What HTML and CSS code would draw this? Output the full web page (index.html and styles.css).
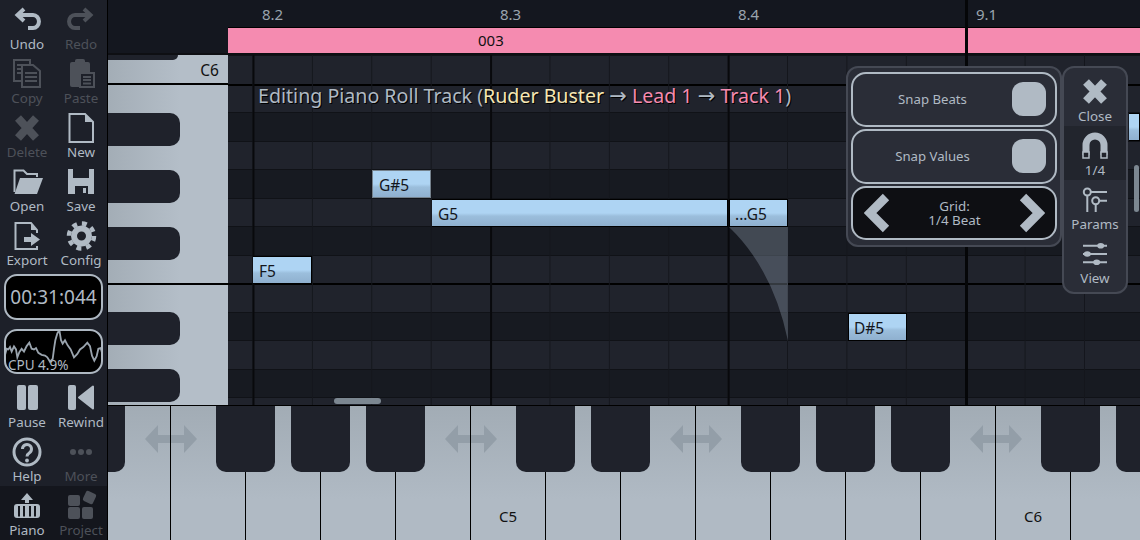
FILE: index.html
```html
<!DOCTYPE html>
<html lang="en">
<head>
    <meta charset="UTF-8">
    <meta name="viewport" content="width=device-width, initial-scale=1.0">
    <title>Piano Roll</title>
    <link rel="stylesheet" href="styles.css">
</head>
<body>

<div class="app">
    <div class="sidebar">
        <div class="tool-grid">
            <div class="tool">
                <svg class="icon" viewBox="0 0 28 28"><path class="line4" d="M11 4 L4.500 10 L11 16 M5 10 H20 a5.500 6 0 0 1 0 13 H15"/></svg>
                <span>Undo</span>
            </div>
            <div class="tool off">
                <svg class="icon flip" viewBox="0 0 28 28"><path class="line4" d="M11 4 L4.500 10 L11 16 M5 10 H20 a5.500 6 0 0 1 0 13 H15"/></svg>
                <span>Redo</span>
            </div>
            <div class="tool off">
                <svg class="icon" viewBox="0 0 28 28"><rect class="line2" x="1" y="1" width="16" height="21"/><path class="line2" d="M4 6 H14 M4 10 H14 M4 14 H14"/><path class="line2 bg" d="M9 6 H20 L27 12 V28 H9 Z"/><path class="line2" d="M12 14 H24 M12 18 H24 M12 22 H24"/></svg>
                <span>Copy</span>
            </div>
            <div class="tool off">
                <svg class="icon" viewBox="0 0 28 28"><rect class="solid" x="3" y="3" width="20" height="25" rx="2"/><rect class="solid" x="8" y="0" width="10" height="6" rx="2"/><path class="line2 bg" d="M13 14 H27 V28 H13 Z"/><path class="line2" d="M16 18 H24 M16 21 H24 M16 24.500 H24"/></svg>
                <span>Paste</span>
            </div>
            <div class="tool off">
                <svg class="icon" viewBox="0 0 28 28"><path class="line8" d="M5 5 L23 25 M23 5 L5 25"/></svg>
                <span>Delete</span>
            </div>
            <div class="tool">
                <svg class="icon" viewBox="0 0 28 28"><path class="line2" d="M2.500 1 H18 L26 9 V29 H2.500 Z"/><path class="solid" d="M18 1 L26 9 H18 Z"/></svg>
                <span>New</span>
            </div>
            <div class="tool">
                <svg class="icon" viewBox="0 0 28 28"><path class="line2" d="M1.500 25 V3.500 H10.500 L14 7 H24 V10"/><path class="solid" d="M7 11 H30 L24 27 H1.500 Z"/></svg>
                <span>Open</span>
            </div>
            <div class="tool">
                <svg class="icon" viewBox="0 0 28 28"><path class="solid cut" d="M1 2 H27 V27 H1 Z M6 2 V11 H22 V2 Z M8 19 V27 H21 V19 Z"/><rect class="solid" x="16" y="21" width="3" height="5"/></svg>
                <span>Save</span>
            </div>
            <div class="tool">
                <svg class="icon" viewBox="0 0 28 28"><path class="line2" d="M24 12 V9 L18 2 H2.500 V28 H24 V25"/><path class="solid" d="M18 2 L24 9 H18 Z"/><path class="solid" d="M11 16 H18 V12 L27 18.500 L18 25 V21 H11 Z"/></svg>
                <span>Export</span>
            </div>
            <div class="tool">
                <svg class="icon" viewBox="0 0 28 28"><circle class="ring" cx="14.500" cy="15" r="7.500"/><circle class="teeth" cx="14.500" cy="15" r="12.500"/></svg>
                <span>Config</span>
            </div>
        </div>

        <div class="meters">
            <div class="timer">00:31:044</div>
            <div class="cpu">
                <svg class="cpu-graph" viewBox="12 12 300 132" preserveAspectRatio="none"><polyline points="15,88 20,70 25,72 30,65 35,78 42,63 48,72 52,95 58,80 65,70 72,78 80,62 88,52 95,70 102,72 108,68 115,82 125,88 135,90 142,95 150,108 158,100 162,70 166,45 172,25 178,15 183,45 188,55 195,45 203,60 212,72 222,95 232,85 240,72 250,65 262,52 270,62 276,90 283,105 290,92 295,70 302,68 307,85"/></svg>
                <span class="cpu-text">CPU 4.9%</span>
            </div>
        </div>

        <div class="tool-grid">
            <div class="tool">
                <svg class="icon" viewBox="0 0 28 28"><rect class="solid" x="4" y="2" width="9" height="25" rx="2"/><rect class="solid" x="15" y="2" width="10" height="25" rx="2"/></svg>
                <span>Pause</span>
            </div>
            <div class="tool">
                <svg class="icon" viewBox="0 0 28 28"><rect class="solid" x="1" y="2" width="8" height="25" rx="2"/><path class="solid round" d="M26 3.500 V25.500 L12 14.500 Z"/></svg>
                <span>Rewind</span>
            </div>
            <div class="tool">
                <svg class="icon" viewBox="0 0 28 28"><circle class="line3" cx="14" cy="15" r="13"/><path class="line3" d="M9.500 12 a4.500 4.500 0 1 1 7 3.700 c-1.700 1.100 -2.500 2 -2.500 3.800"/><circle class="solid" cx="14" cy="23.500" r="1.900"/></svg>
                <span>Help</span>
            </div>
            <div class="tool off">
                <svg class="icon" viewBox="0 0 28 28"><circle class="solid" cx="6" cy="15" r="3"/><circle class="solid" cx="14" cy="15" r="3"/><circle class="solid" cx="22" cy="15" r="3"/></svg>
                <span>More</span>
            </div>
        </div>

        <div class="tool-grid tabs">
            <div class="tool">
                <svg class="icon" viewBox="0 0 28 28"><path class="solid" d="M14 2 L20 9 H16 V12 H12 V9 H8 Z"/><rect class="solid" x="1" y="13" width="26" height="14" rx="3"/><path class="slots" d="M6 15 V21 M11 15 V21 M17 15 V21 M22 15 V21 M6 21 V25.500 M11 21 V25.500 M17 21 V25.500 M22 21 V25.500"/></svg>
                <span>Piano</span>
            </div>
            <div class="tool off">
                <svg class="icon" viewBox="0 0 28 28"><rect class="solid" x="1" y="4" width="12" height="11" rx="2"/><rect class="solid tilt" x="17" y="1" width="11" height="11" rx="2"/><rect class="solid" x="1" y="16" width="12" height="12" rx="2"/><rect class="solid" x="15" y="16" width="11" height="12" rx="2"/></svg>
                <span>Project</span>
            </div>
        </div>
    </div>

    <div class="main">
        <div class="top">
            <div class="ruler">
                <span>8.2</span>
                <span>8.3</span>
                <span>8.4</span>
                <span>9.1</span>
            </div>
            <div class="clip"><span>003</span></div>
        </div>

        <div class="roll-row">
            <div class="vpiano">
                <div class="oct oct-first">
                    <div class="vkey stub"></div>
                    <span class="vlabel">C6</span>
                </div>
                <div class="oct oct-mid">
                    <div class="vkey"></div>
                    <div class="vkey"></div>
                    <div class="vkey"></div>
                </div>
                <div class="oct oct-last">
                    <div class="vkey"></div>
                    <div class="vkey"></div>
                </div>
            </div>

            <div class="grid">
                <div class="rows">
                    <div class="row light"></div>
                    <div class="row light strong"></div>
                    <div class="row dark"></div>
                    <div class="row light"></div>
                    <div class="row dark"></div>
                    <div class="row light"></div>
                    <div class="row dark"></div>
                    <div class="row light"></div>
                    <div class="row light strong"></div>
                    <div class="row dark"></div>
                    <div class="row light"></div>
                    <div class="row dark"></div>
                    <div class="row light"></div>
                </div>
                <div class="grid-lines"></div>

                <svg class="tail" viewBox="0 0 60 115"><path d="M0 0 H59 V114 Q44 42 0 0 Z"/></svg>

                <div class="note dim n-gs5">G#5</div>
                <div class="note n-g5">G5</div>
                <div class="note n-g5b">...G5</div>
                <div class="note n-f5">F5</div>
                <div class="note n-ds5">D#5</div>
                <div class="note n-edge"></div>

                <div class="editing">Editing Piano Roll Track (<span class="song">Ruder Buster</span> <span class="arr">→</span> <span class="pink">Lead 1</span> <span class="arr">→</span> <span class="pink">Track 1</span>)</div>

                <div class="hscroll"></div>
                <div class="vscroll"></div>
            </div>
        </div>

        <div class="keyboard">
            <div class="arrows">
                <svg class="arrow" viewBox="0 0 52 28"><path d="M0 14 L13 0 V10 H39 V0 L52 14 L39 28 V18 H13 V28 Z"/></svg>
                <svg class="arrow" viewBox="0 0 52 28"><path d="M0 14 L13 0 V10 H39 V0 L52 14 L39 28 V18 H13 V28 Z"/></svg>
                <svg class="arrow short" viewBox="0 0 52 28"><path d="M0 14 L13 0 V10 H39 V0 L52 14 L39 28 V18 H13 V28 Z"/></svg>
                <svg class="arrow" viewBox="0 0 52 28"><path d="M0 14 L13 0 V10 H39 V0 L52 14 L39 28 V18 H13 V28 Z"/></svg>
            </div>
            <div class="white-keys">
                <div class="wkey wkey-first"></div>
                <div class="wkey"></div>
                <div class="wkey"></div>
                <div class="wkey"></div>
                <div class="wkey"></div>
                <div class="wkey">C5</div>
                <div class="wkey"></div>
                <div class="wkey"></div>
                <div class="wkey"></div>
                <div class="wkey"></div>
                <div class="wkey"></div>
                <div class="wkey"></div>
                <div class="wkey">C6</div>
                <div class="wkey wkey-last"></div>
            </div>
            <div class="black-keys">
                <div class="bkey bkey-first"></div>
                <div class="bkey skip"></div>
                <div class="bkey"></div>
                <div class="bkey"></div>
                <div class="bkey skip"></div>
                <div class="bkey"></div>
                <div class="bkey skip"></div>
                <div class="bkey"></div>
                <div class="bkey"></div>
                <div class="bkey skip"></div>
                <div class="bkey bkey-last"></div>
            </div>
        </div>

        <div class="measure-line"></div>

        <div class="float-panels">
            <div class="snap-panel">
                <div class="snap-row">
                    <span class="snap-label">Snap Beats</span>
                    <div class="toggle"></div>
                </div>
                <div class="snap-row">
                    <span class="snap-label">Snap Values</span>
                    <div class="toggle"></div>
                </div>
                <div class="snap-row grid-row">
                    <svg class="chevron" viewBox="0 0 26 40"><path d="M22 4 L6 20 L22 36"/></svg>
                    <span class="grid-label">Grid:<br>1/4 Beat</span>
                    <svg class="chevron" viewBox="0 0 26 40"><path d="M4 4 L20 20 L4 36"/></svg>
                </div>
            </div>
            <div class="side-panel">
                <div class="tool">
                    <svg class="icon" viewBox="0 0 28 28"><path class="line8" d="M5 5 L23 24 M23 5 L5 24"/></svg>
                    <span>Close</span>
                </div>
                <div class="tool picked">
                    <svg class="icon" viewBox="0 0 28 28"><path class="line7" d="M5 24 V14 a9 9 0 0 1 18 0 V24"/><rect class="tip" x="2" y="21" width="6" height="6"/><rect class="tip" x="20" y="21" width="6" height="6"/></svg>
                    <span>1/4</span>
                </div>
                <div class="tool">
                    <svg class="icon" viewBox="0 0 28 28"><path class="line2" d="M6.300 11 V27 M10 7 H26 M14.700 19 V27 M18.500 15.700 H26"/><circle class="line2" cx="6.300" cy="7" r="3.500"/><circle class="line2" cx="14.700" cy="15.700" r="3.500"/></svg>
                    <span>Params</span>
                </div>
                <div class="tool">
                    <svg class="icon" viewBox="0 0 28 28"><path class="line2" d="M2 6.700 H26 M2 15 H26 M2 23.300 H26"/><ellipse class="solid" cx="19.700" cy="6.700" rx="3.500" ry="2.800"/><ellipse class="solid" cx="6.300" cy="15" rx="3.500" ry="2.800"/><ellipse class="solid" cx="15.700" cy="23.300" rx="3.500" ry="2.800"/></svg>
                    <span>View</span>
                </div>
            </div>
        </div>
    </div>
</div>

</body>
</html>
```

FILE: styles.css
```css
* {
    box-sizing: border-box;
}
body {
    margin: 0;
    width: 1140px;
    height: 540px;
    overflow: hidden;
    background-color: #000;
    font-family: "Noto Sans", sans-serif;
    color: #b0bac4;
}
.app {
    display: flex;
    width: 1140px;
    height: 540px;
}

/* left toolbar */
.sidebar {
    width: 108px;
    flex-shrink: 0;
    background-color: #1d2029;
    border-right: 1px solid #000;
}
.tool-grid {
    display: grid;
    grid-template-columns: 54px 54px;
    grid-auto-rows: 54px;
}
.tabs {
    background-color: #14161d;
}
.tool {
    display: flex;
    flex-direction: column;
    align-items: center;
    height: 54px;
    padding-top: 5px;
    font-size: 13.4px;
    line-height: 16px;
    color: #b0bac4;
}
.tool span {
    margin-top: 3px;
    white-space: nowrap;
}
.tool.off {
    color: #4d5159;
}
.icon {
    display: block;
    width: 28px;
    height: 28px;
    flex-shrink: 0;
    overflow: visible;
}
.flip {
    transform: scaleX(-1);
}
.solid {
    fill: currentColor;
}
.solid.cut {
    fill-rule: evenodd;
}
.solid.round {
    stroke: currentColor;
    stroke-width: 2;
    stroke-linejoin: round;
}
.tilt {
    transform: rotate(25deg);
    transform-origin: 22.5px 6.5px;
}
.line2, .line3, .line4, .line7, .line8 {
    fill: none;
    stroke: currentColor;
}
.line2 { stroke-width: 2; }
.line3 { stroke-width: 3; }
.line4 { stroke-width: 4; }
.line7 { stroke-width: 7; }
.line8 { stroke-width: 8; }
.line2.bg {
    fill: #1d2029;
}
.slots {
    fill: none;
    stroke: #14161d;
    stroke-width: 2;
}
.ring {
    fill: none;
    stroke: currentColor;
    stroke-width: 6;
}
.teeth {
    fill: none;
    stroke: currentColor;
    stroke-width: 4.5;
    stroke-dasharray: 4.9 4.92;
}
.tip {
    fill: #20232b;
    stroke: currentColor;
    stroke-width: 1.5;
}

.meters {
    display: flex;
    flex-direction: column;
    gap: 9px;
    height: 108px;
    padding: 4px 4px 0;
}
.timer {
    height: 46px;
    background-color: #000;
    border: 2px solid #aeb8c2;
    border-radius: 13px;
    text-align: center;
    font-size: 19px;
    line-height: 42px;
}
.cpu {
    position: relative;
    height: 45px;
    background-color: #000;
    border: 2px solid #aeb8c2;
    border-radius: 13px;
    overflow: hidden;
}
.cpu-graph {
    position: absolute;
    left: -2px;
    top: -2px;
    width: 100px;
    height: 45px;
}
.cpu-graph polyline {
    fill: none;
    stroke: #9aa4ae;
    stroke-width: 5.5;
}
.cpu-text {
    position: absolute;
    left: 2px;
    bottom: -1px;
    font-size: 13.5px;
    line-height: 16px;
}

/* main area */
.main {
    position: relative;
    flex: 1;
    display: flex;
    flex-direction: column;
    min-width: 0;
}
.top {
    height: 55px;
    padding-left: 120px;
    padding-top: 1px;
    background-color: #14171f;
    border-bottom: 2px solid #0e0f13;
}
.ruler {
    display: flex;
    height: 27px;
    padding-left: 34px;
    overflow: hidden;
    font-size: 15px;
    line-height: 26px;
    color: #9aa4ae;
    background-color: #14171f;
    border-bottom: 1px solid #000;
}
.ruler span {
    width: 238px;
    flex-shrink: 0;
}
.ruler span:last-child {
    width: 60px;
}
.clip {
    height: 25px;
    background-color: #f58bb0;
    color: #111;
    font-size: 15px;
    line-height: 25px;
    padding-left: 250px;
}

.roll-row {
    display: flex;
    height: 350px;
}
.vpiano {
    width: 120px;
    flex-shrink: 0;
    background: linear-gradient(to right, #a3adb6, #b4bec8 60%);
}
.oct {
    display: flex;
    flex-direction: column;
    position: relative;
    color: #111;
}
.oct-first {
    height: 30px;
    border-bottom: 2px solid #000;
}
.oct-mid {
    height: 200px;
    padding-top: 28px;
    gap: 24px;
    border-bottom: 2px solid #000;
}
.oct-last {
    padding-top: 27px;
    gap: 24px;
}
.vkey {
    width: 72px;
    height: 33px;
    flex-shrink: 0;
    background-color: #1f222b;
    border-radius: 0 10px 10px 0;
}
.vkey.stub {
    width: 70px;
    height: 5px;
    border-radius: 0 0 8px 0;
}
.vlabel {
    align-self: flex-end;
    padding-right: 9px;
    font-size: 15.5px;
    line-height: 20px;
}

.grid {
    position: relative;
    flex: 1;
    overflow: hidden;
    background-color: #20232c;
}
.rows {
    display: flex;
    flex-direction: column;
}
.row {
    height: 28.5px;
    flex-shrink: 0;
    border-top: 1px solid #101217;
}
.row.light {
    background-color: #20232c;
}
.row.dark {
    background-color: #171a21;
}
.row.strong {
    border-top: 2px solid #000;
}
.grid-lines {
    position: absolute;
    inset: 0;
    background-image:
        linear-gradient(to right, #08090c 2px, transparent 2px),
        linear-gradient(to right, #14161c 1px, transparent 1px);
    background-size: 237.6px 100%, 59.4px 100%;
    background-position: 24.5px 0, 24.5px 0;
}

.note {
    position: absolute;
    height: 28px;
    width: 59px;
    padding-left: 6px;
    font-size: 15.5px;
    line-height: 28px;
    color: #14161c;
    background: linear-gradient(to bottom, #aed4f3 50%, #9bbedc 62%, #8fb0cf 100%);
    border: 1px solid #000;
    border-left-width: 0;
    white-space: nowrap;
}
.note.dim {
    border: 1px solid #75828d;
}
.n-gs5 { left: 144px; top: 115px; }
.n-g5 { left: 204px; top: 144px; width: 296px; }
.n-g5b { left: 501px; top: 144px; width: 59px; border-left: 1px solid #000; padding-left: 5px; }
.n-f5 { left: 25px; top: 201px; }
.n-ds5 { left: 620px; top: 258px; border-left: 1px solid #000; padding-left: 5px; }
.n-edge { left: 901px; top: 58px; width: 11px; padding: 0; }

.tail {
    position: absolute;
    left: 501px;
    top: 172px;
    width: 60px;
    height: 115px;
}
.tail path {
    fill: #8a95a5;
    fill-opacity: 0.38;
}

.editing {
    position: absolute;
    left: 30px;
    top: 28px;
    font-size: 19.6px;
    line-height: 26px;
    white-space: nowrap;
    color: #b0bac4;
    text-shadow: 1px 1px 0 #000;
}
.arr {
    font-family: "DejaVu Sans", sans-serif;
    font-size: 21px;
}
.song {
    color: #f6e7b4;
}
.pink {
    color: #f58bb0;
}
.hscroll {
    position: absolute;
    left: 106px;
    top: 343px;
    width: 47px;
    height: 6px;
    border-radius: 3px;
    background-color: #7c8791;
}
.vscroll {
    position: absolute;
    right: 1px;
    top: 110px;
    width: 5px;
    height: 47px;
    border-radius: 3px;
    background-color: #7c8791;
}

/* bottom keyboard */
.keyboard {
    position: relative;
    height: 135px;
    border-top: 1px solid #000;
    background: linear-gradient(to bottom, #a2acb5, #b0bac4 70%);
}
.arrows {
    position: absolute;
    left: 37px;
    top: 19px;
    display: flex;
    gap: 248px;
}
.arrow {
    width: 52px;
    height: 28px;
    flex-shrink: 0;
}
.arrow path {
    fill: #939ea8;
}
.arrow.short {
    margin-left: -75px;
}
.white-keys {
    position: relative;
    display: flex;
    height: 100%;
}
.wkey {
    width: 75px;
    flex-shrink: 0;
    border-right: 1px solid #000;
    padding-top: 100px;
    padding-left: 28px;
    font-size: 15px;
    line-height: 20px;
    color: #111;
}
.wkey-first {
    width: 63px;
}
.wkey-last {
    width: 69px;
    border-right: 0;
}
.black-keys {
    position: absolute;
    left: 0;
    top: 0;
    display: flex;
    gap: 16px;
}
.bkey {
    width: 59px;
    height: 66px;
    flex-shrink: 0;
    background-color: #1f222b;
    border-radius: 0 0 10px 10px;
}
.bkey-first {
    width: 17px;
    border-radius: 0 0 10px 0;
}
.bkey-last {
    width: 24px;
    border-radius: 0 0 0 10px;
}
.bkey.skip {
    margin-left: 75px;
}

.measure-line {
    position: absolute;
    left: 857px;
    top: 0;
    width: 3px;
    height: 405px;
    background-color: #050608;
}

/* floating snap panels */
.float-panels {
    position: absolute;
    left: 738px;
    top: 66px;
    display: flex;
    align-items: flex-start;
}
.snap-panel {
    display: flex;
    flex-direction: column;
    gap: 2px;
    width: 216px;
    height: 181px;
    padding: 4px 3px;
    background-color: #2a2d37;
    border: 2px solid #454954;
    border-radius: 12px;
}
.snap-row {
    display: flex;
    align-items: center;
    height: 55px;
    padding: 0 9px 1px 0;
    border: 2px solid #b0bac4;
    border-radius: 15px;
}
.snap-label {
    flex: 1;
    text-align: center;
    font-size: 13.2px;
}
.toggle {
    width: 34px;
    height: 34px;
    background-color: #b0bac4;
    border-radius: 11px;
}
.grid-row {
    height: 54px;
    padding: 0 10px 0 11px;
    background-color: #0e0f13;
}
.chevron {
    width: 26px;
    height: 40px;
    flex-shrink: 0;
}
.chevron path {
    fill: none;
    stroke: #b0bac4;
    stroke-width: 9;
}
.grid-label {
    flex: 1;
    text-align: center;
    font-size: 13.4px;
    line-height: 14px;
}
.side-panel {
    width: 66px;
    height: 228px;
    padding-top: 4px;
    background-color: #2a2d37;
    border: 2px solid #454954;
    border-radius: 12px;
}
.side-panel .tool.picked {
    background-color: #22252d;
}
```
